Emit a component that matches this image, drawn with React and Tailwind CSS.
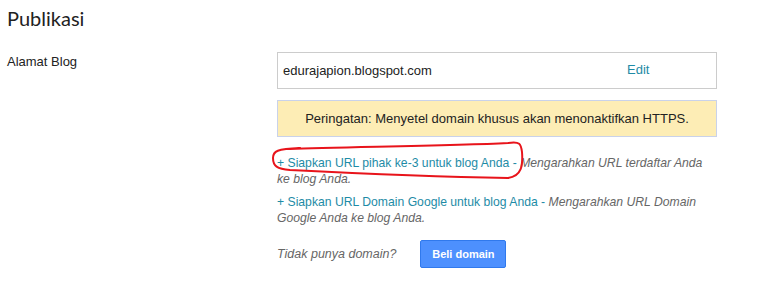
export default function App() {
  return (
    <div className="relative w-[762px] h-[289px] bg-white text-[#222] font-['Liberation_Sans',Arial,sans-serif]">
      <h1 className="pl-[7px] pt-[4px] text-[20px] leading-[28px] text-[#222] font-['Lato',sans-serif]">
        Publikasi
      </h1>

      <div className="flex mt-[20px]">
        <div className="w-[277px] pl-[7px] pt-[2px] text-[13px] leading-[16px]">Alamat Blog</div>

        <div className="w-[440px]">
          <div className="flex items-center h-[37px] border border-[#cccccc] pl-[5px] text-[13px]">
            <span className="w-[344px]">edurajapion.blogspot.com</span>
            <a className="-mt-[2px] text-[#1e8ba6] cursor-pointer">Edit</a>
          </div>

          <div className="mt-[11px] h-[37px] flex items-center justify-center border border-[#c9d2ea] bg-[#fdedb5] text-[13px]">
            Peringatan: Menyetel domain khusus akan menonaktifkan HTTPS.
          </div>

          <p className="w-[432px] mt-[18px] text-[12.2px] leading-[16px]">
            <a className="text-[#1e8ba6] cursor-pointer">+ Siapkan URL pihak ke-3 untuk blog Anda</a>
            <span className="text-[#1e8ba6]"> - </span>
            <i className="text-[#666]">Mengarahkan URL terdaftar Anda ke blog Anda.</i>
          </p>

          <p className="w-[432px] mt-[7px] text-[12.2px] leading-[16px]">
            <a className="text-[#1e8ba6] cursor-pointer">+ Siapkan URL Domain Google untuk blog Anda</a>
            <span className="text-[#1e8ba6]"> - </span>
            <i className="text-[#666]">Mengarahkan URL Domain Google Anda ke blog Anda.</i>
          </p>

          <div className="flex items-center mt-[14px] gap-[24px]">
            <i className="text-[12.5px] text-[#666]">Tidak punya domain?</i>
            <button className="w-[86px] h-[28px] rounded-[2px] border border-[#3079ed] bg-[#4d90fe] text-white text-[11px] font-bold">
              Beli domain
            </button>
          </div>
        </div>
      </div>

      <svg className="absolute left-0 top-0 pointer-events-none" width="762" height="289" viewBox="0 0 762 289">
        <path
          d="M 290 149 C 340 147, 450 146, 508 143 C 520 141, 521 144, 522 152 C 523 165, 522 176, 508 178 C 450 177, 350 173, 290 170 C 277 169, 273 166, 273 158 C 273 151, 277 149, 300 148"
          fill="none"
          stroke="#e8141b"
          strokeWidth="2"
          strokeLinecap="round"
        />
      </svg>
    </div>
  );
}
